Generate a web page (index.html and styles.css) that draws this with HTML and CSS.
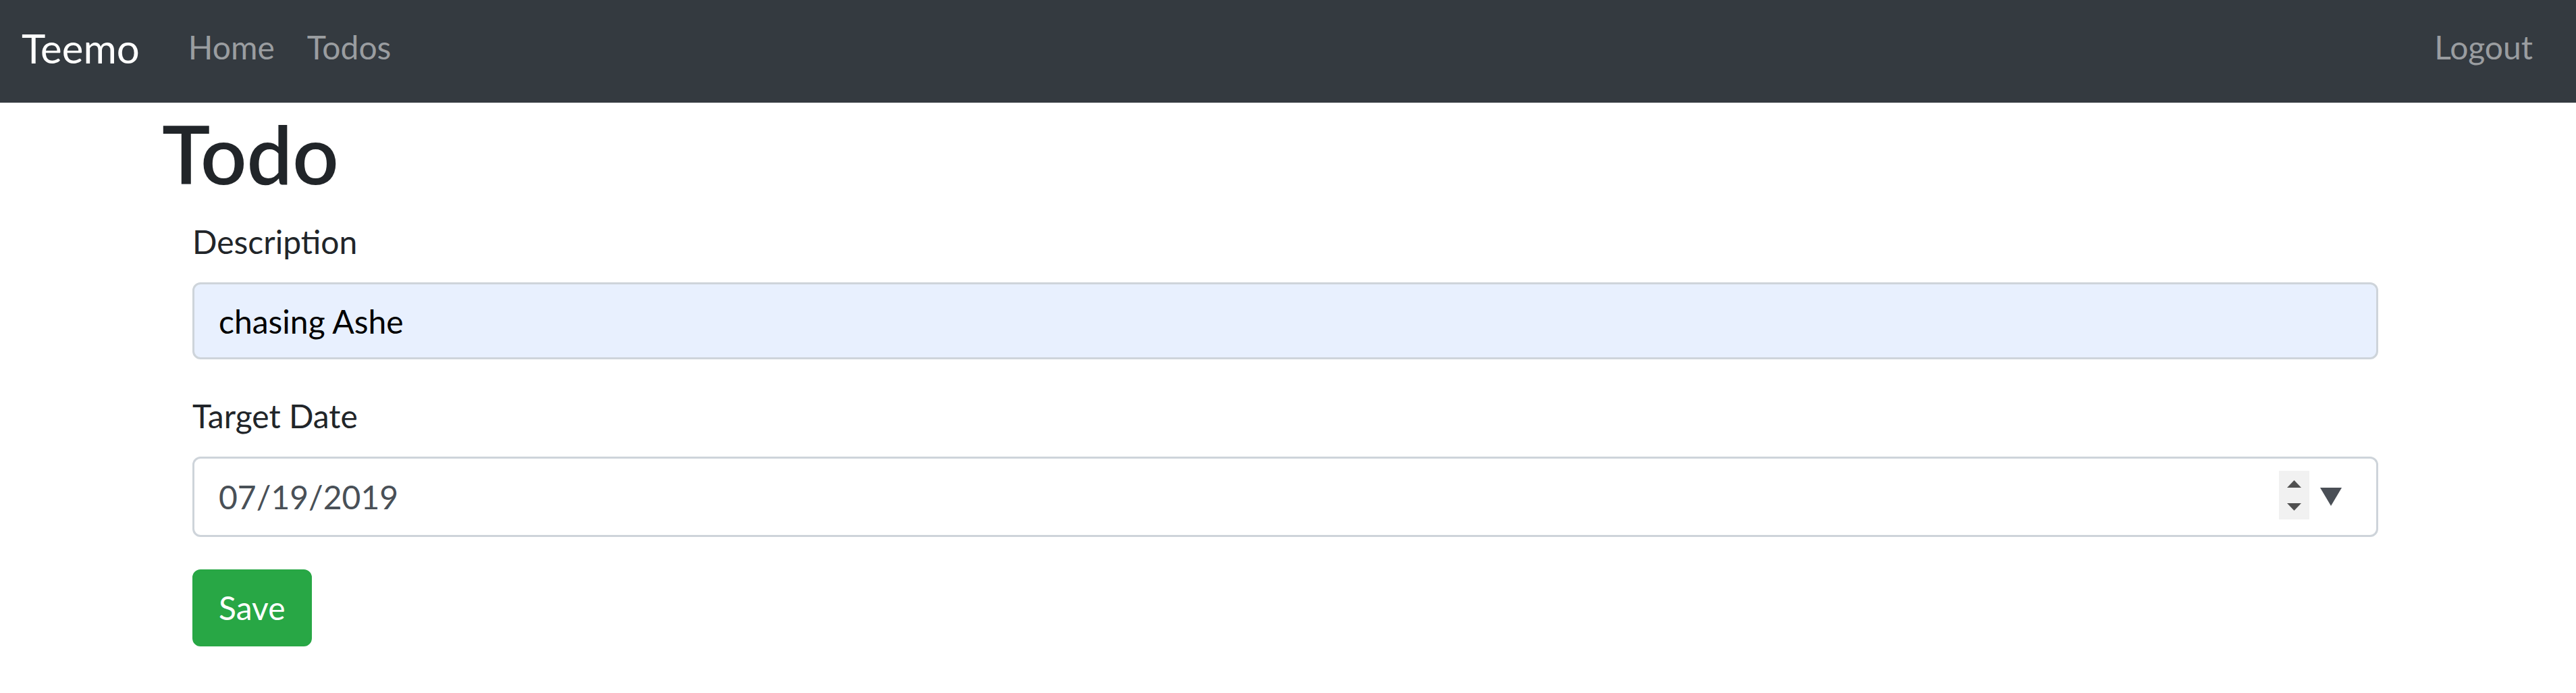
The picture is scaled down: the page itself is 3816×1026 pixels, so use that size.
FILE: index.html
```html
<!DOCTYPE html>
<html lang="en">
<head>
<meta charset="utf-8">
<title>Todo</title>
<link rel="stylesheet" href="styles.css">
</head>
<body>
<nav class="navbar">
  <a class="brand" href="#">Teemo</a>
  <ul class="nav">
    <li><a class="nav-link" href="#">Home</a></li>
    <li><a class="nav-link" href="#">Todos</a></li>
  </ul>
  <ul class="nav nav-right">
    <li><a class="nav-link" href="#">Logout</a></li>
  </ul>
</nav>
<main class="container">
  <h1 class="title">Todo</h1>
  <form class="todo-form">
    <div class="form-group">
      <label class="form-label" for="description">Description</label>
      <input class="form-control autofilled" id="description" type="text" value="chasing Ashe">
    </div>
    <div class="form-group">
      <label class="form-label">Target Date</label>
      <div class="form-control date-control">
        <span class="date-value">07/19/2019</span>
        <svg class="spinner" width="45" height="72" viewBox="0 0 45 72" aria-hidden="true">
          <rect width="45" height="72" fill="#f1f1f1"/>
          <polygon points="12,25 22.5,14 33,25" fill="#505050"/>
          <polygon points="12,48 33,48 22.5,59" fill="#505050"/>
        </svg>
        <svg class="dropdown" width="32" height="27" viewBox="0 0 32 27" aria-hidden="true">
          <polygon points="0,0 32,0 16,27" fill="#4a4f56"/>
        </svg>
      </div>
    </div>
    <button class="btn-save" type="button">Save</button>
  </form>
</main>
</body>
</html>
```
FILE: styles.css
```css
* { box-sizing: border-box; }

html, body {
  margin: 0;
  background: #fff;
}

body {
  font-family: Lato, "Noto Sans", sans-serif;
  font-size: 48px;
  line-height: 1.5;
  color: #212529;
}

/* ---------- navbar ---------- */
.navbar {
  display: flex;
  align-items: flex-start;
  height: 152px;
  padding: 26px 40px 0 32px;
  background: #343a40;
}

.brand {
  font-size: 60px;
  line-height: 90px;
  color: #fff;
  text-decoration: none;
  margin-right: 48px;
}

.nav {
  display: flex;
  list-style: none;
  margin: 0;
  padding: 8px 0 0;
}

.nav-right {
  margin-left: auto;
}

.nav-link {
  display: block;
  padding: 0 24px;
  line-height: 72px;
  color: #9a9da0;
  text-decoration: none;
}

/* ---------- content ---------- */
.container {
  padding: 0 240px;
}

.title {
  margin: 0 0 24px;
  padding-top: 4px;
  font-size: 120px;
  line-height: 142px;
  font-weight: 600;
  color: #212529;
}

.todo-form {
  width: 3238px;
  margin-left: 45px;
}

.form-group {
  margin-bottom: 48px;
}

.form-label {
  display: inline-block;
  margin-bottom: 24px;
  line-height: 72px;
}

.form-control {
  display: block;
  width: 100%;
  height: 114px;
  padding: 18px 36px;
  font-family: inherit;
  font-size: 48px;
  line-height: 72px;
  color: #495057;
  background: #fff;
  border: 3px solid #ced4da;
  border-radius: 12px;
  outline: none;
}

.autofilled {
  background: #e8f0fe;
  color: #000;
}

.date-control {
  display: flex;
  align-items: center;
  height: 119px;
  padding: 0 36px;
}

.date-value {
  flex: 1;
}

.spinner {
  display: block;
  margin-top: -5px;
}

.dropdown {
  display: block;
  margin: 0 15px 0 16px;
}

.btn-save {
  display: inline-block;
  padding: 18px 36px;
  font-family: inherit;
  font-size: 48px;
  line-height: 72px;
  color: #fff;
  background: #28a745;
  border: 3px solid #28a745;
  border-radius: 12px;
  cursor: pointer;
}
```
